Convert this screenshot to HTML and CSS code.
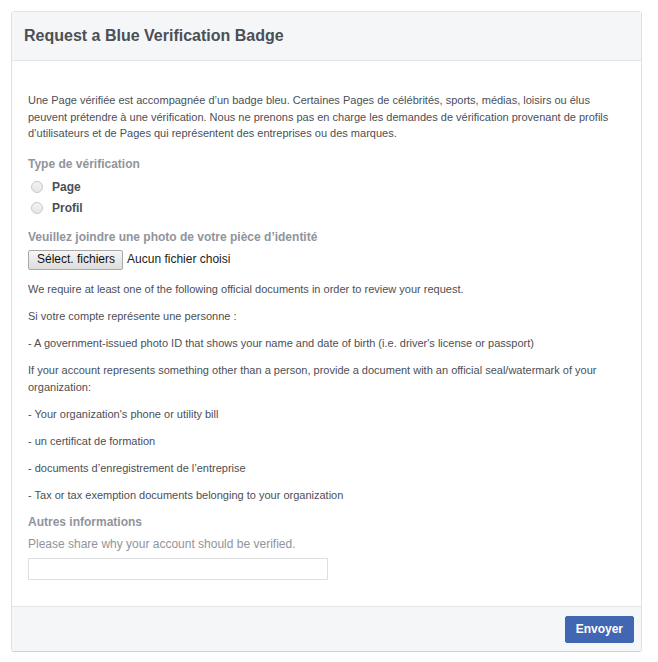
FILE: index.html
```html
<!DOCTYPE html>
<html lang="fr">
<head>
    <meta charset="UTF-8">
    <meta name="viewport" content="width=device-width, initial-scale=1.0">
    <title>Request a Blue Verification Badge</title>
    <link rel="stylesheet" href="styles.css">
</head>
<body>
    <div class="card">
        <div class="card-header">
            <h2>Request a Blue Verification Badge</h2>
        </div>

        <form class="card-body" onsubmit="return false">
            <p class="intro">Une Page vérifiée est accompagnée d’un badge bleu. Certaines Pages de célébrités, sports, médias, loisirs ou élus peuvent prétendre à une vérification. Nous ne prenons pas en charge les demandes de vérification provenant de profils d’utilisateurs et de Pages qui représentent des entreprises ou des marques.</p>

            <div class="field-label first">Type de vérification</div>
            <div class="radios">
                <label class="radio"><input type="radio" name="type" value="page"> Page</label>
                <label class="radio"><input type="radio" name="type" value="profil"> Profil</label>
            </div>

            <div class="field-label photo">Veuillez joindre une photo de votre pièce d’identité</div>
            <label class="file-row">
                <span class="file-btn">Sélect. fichiers</span>
                <span class="file-name">Aucun fichier choisi</span>
            </label>

            <div class="docs">
                <p>We require at least one of the following official documents in order to review your request.</p>
                <p>Si votre compte représente une personne :</p>
                <p>- A government-issued photo ID that shows your name and date of birth (i.e. driver's license or passport)</p>
                <p>If your account represents something other than a person, provide a document with an official seal/watermark of your organization:</p>
                <p>- Your organization's phone or utility bill</p>
                <p>- un certificat de formation</p>
                <p>- documents d’enregistrement de l’entreprise</p>
                <p>- Tax or tax exemption documents belonging to your organization</p>
            </div>

            <div class="field-label other">Autres informations</div>
            <p class="hint">Please share why your account should be verified.</p>
            <input type="text" class="text-input">
        </form>

        <div class="card-footer">
            <button class="btn-primary">Envoyer</button>
        </div>
    </div>
</body>
</html>
```

FILE: styles.css
```css
body {
    margin: 11px;
    font-family: "Liberation Sans", Arial, sans-serif;
    font-size: 12px;
    line-height: 1.4;
    color: #4b4f56;
    background: #fff;
}

.card {
    width: 631px;
    box-sizing: border-box;
    border: 1px solid #dddfe2;
    border-color: #e5e6e9 #dfe0e4 #d0d1d5;
    border-radius: 3px;
    background: #fff;
}

.card-header {
    padding: 12px;
    background: #f5f6f7;
    border-bottom: 1px solid #e5e5e5;
}

.card-header h2 {
    margin: 0;
    font-size: 16px;
    line-height: 24px;
    font-weight: bold;
    color: #4b4f56;
}

.card-body {
    padding: 31px 16px 26px;
}

.card-body p {
    margin: 0;
}

.intro,
.docs {
    font-size: 11px;
    line-height: 16.7px;
}

.field-label {
    font-weight: bold;
    color: #90949c;
}

.field-label.first {
    margin-top: 14px;
}

.radios {
    margin-top: 4px;
}

.radio {
    display: flex;
    align-items: center;
    height: 21px;
    padding-left: 3px;
    font-weight: bold;
    color: #4b4f56;
}

.radio input {
    appearance: none;
    -webkit-appearance: none;
    width: 12px;
    height: 12px;
    margin: 0 9px 0 0;
    border: 1px solid #c9c9c9;
    border-radius: 50%;
    background: linear-gradient(#f3f3f3, #e6e6e6);
}

.field-label.photo {
    margin-top: 10px;
}

.file-row {
    display: flex;
    align-items: center;
    margin-top: 4px;
    height: 20px;
}

.file-btn {
    display: flex;
    align-items: center;
    height: 20px;
    box-sizing: border-box;
    padding: 0 7px 0 8px;
    border: 1px solid #a9a9a9;
    border-radius: 2px;
    background: linear-gradient(#f6f6f6, #dcdcdc);
    color: #111;
}

.file-name {
    margin-left: 4px;
    color: #222;
}

.docs {
    margin-top: 11px;
}

.docs p + p {
    margin-top: 10.45px;
}

.field-label.other {
    margin-top: 10px;
}

.card-body .hint {
    margin-top: 5px;
    color: #90949c;
}

.text-input {
    display: block;
    width: 300px;
    height: 22px;
    box-sizing: border-box;
    margin: 5px 0 0;
    border: 1px solid #dddfe2;
    font-family: inherit;
    font-size: 12px;
}

.card-footer {
    display: flex;
    justify-content: flex-end;
    padding: 9px 7px 8px 8px;
    background: #f5f6f7;
    border-top: 1px solid #e5e5e5;
}

.btn-primary {
    height: 27px;
    padding: 0 10px;
    border: 1px solid #4267b2;
    border-radius: 2px;
    background: #4267b2;
    color: #fff;
    font-family: inherit;
    font-size: 12px;
    font-weight: bold;
    cursor: pointer;
}
```
